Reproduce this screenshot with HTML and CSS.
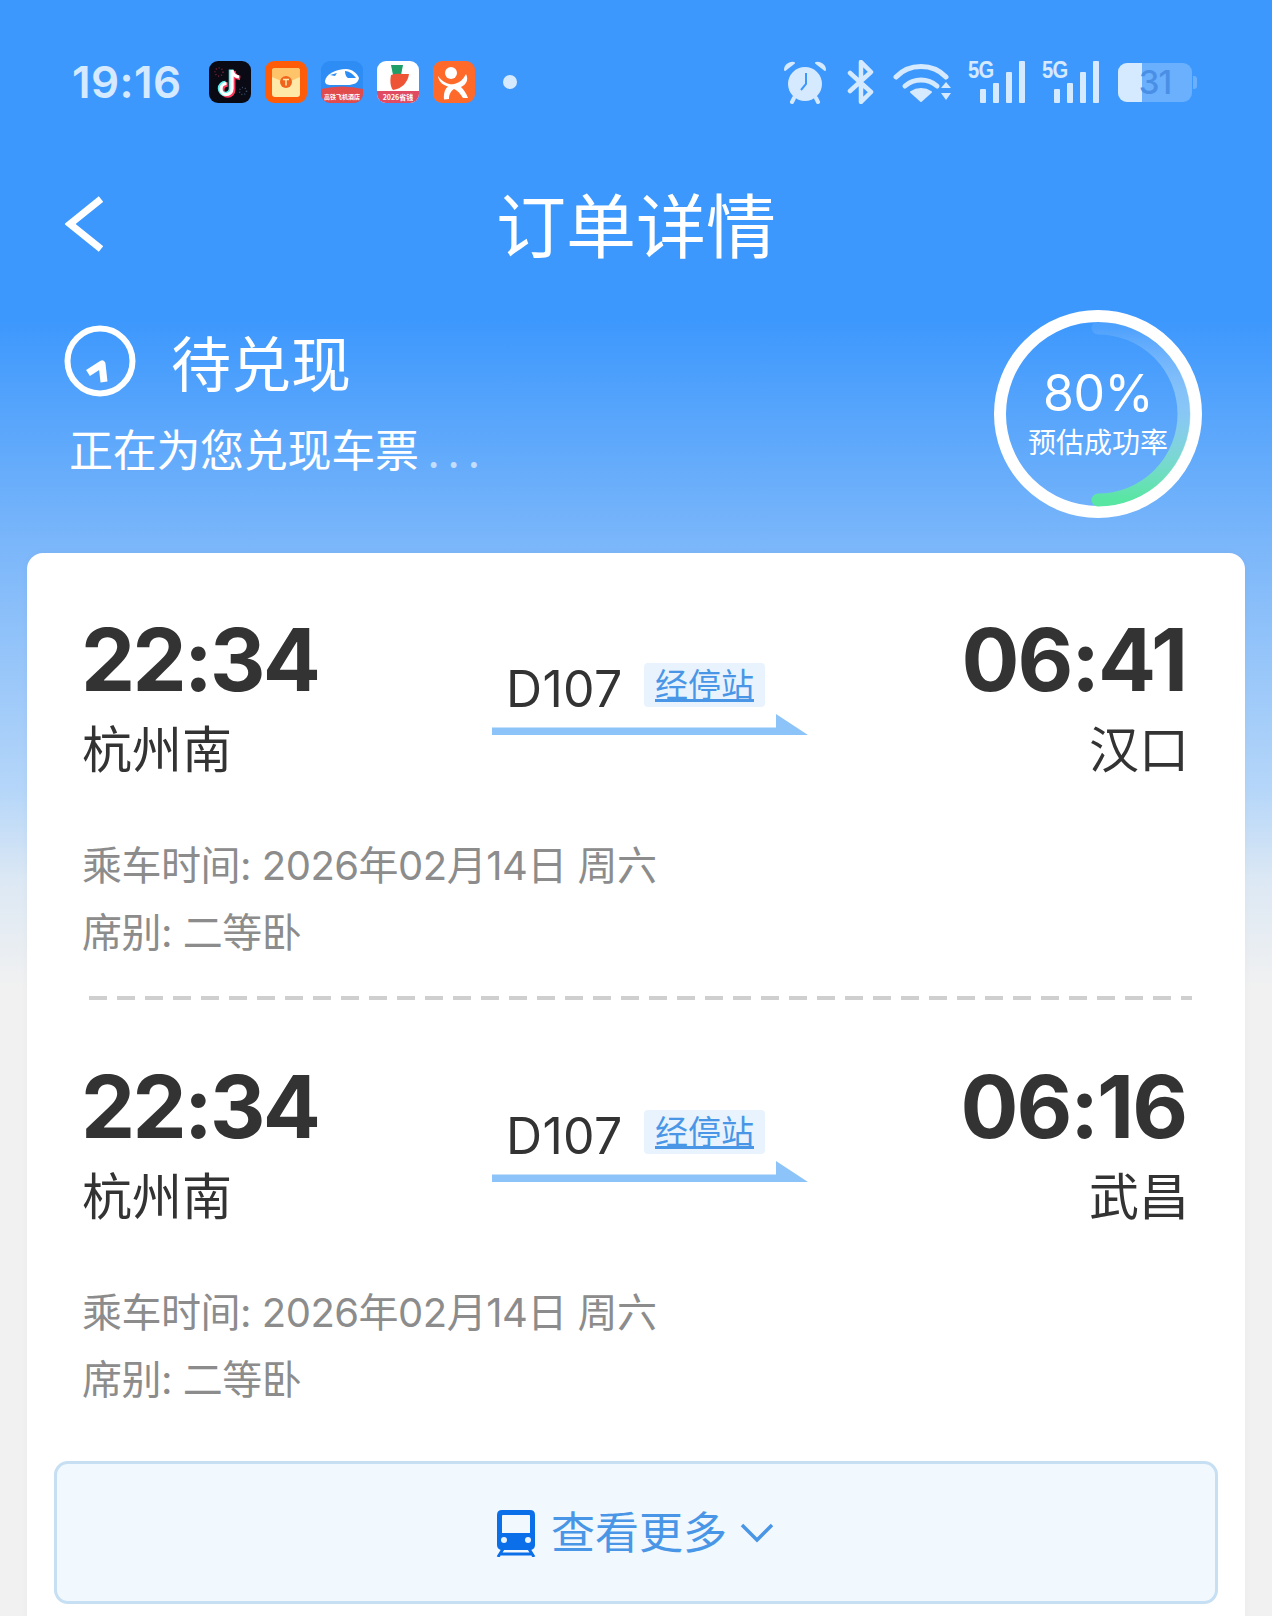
FILE: index.html
```html
<!DOCTYPE html>
<html lang="zh-CN">
<head>
<meta charset="utf-8">
<title>订单详情</title>
<link rel="stylesheet" href="styles.css">
</head>
<body>
<div class="page">
  <div class="status">
    <span class="clock">19:16</span>
    <div class="apps">
      <svg class="app" viewBox="0 0 42 42"><rect width="42" height="42" rx="9" fill="#0a0a14"/><circle cx="10" cy="11" r="4" fill="none" stroke="#7a2038" stroke-width="1.5" stroke-dasharray="1 2"/><circle cx="34" cy="30" r="3.5" fill="none" stroke="#38506a" stroke-width="1.5" stroke-dasharray="1 2"/><path d="M23 9v19a5.5 5.5 0 1 1-5.5-5.5" fill="none" stroke="#ff3a5c" stroke-width="4.5" transform="translate(1.2 1)"/><path d="M23 9c.5 4 3 6.500 7 7" fill="none" stroke="#ff3a5c" stroke-width="4.500" transform="translate(1.2 1)"/><path d="M23 9v19a5.500 5.500 0 1 1-5.500-5.500" fill="none" stroke="#5ff0ea" stroke-width="4.500" transform="translate(-1 -.5)"/><path d="M23 9v19a5.500 5.500 0 1 1-5.500-5.500M23 9c.5 4 3 6.500 7 7" fill="none" stroke="#fff" stroke-width="3.200"/></svg>
      <svg class="app" viewBox="0 0 42 42"><rect width="42" height="42" rx="9" fill="#ff5c0a"/><rect x="7" y="7" width="28" height="29" rx="3" fill="#ffe9a8"/><path d="M7 10q0-3 3-3h22q3 0 3 3v6l-14 6-14-6z" fill="#ffc46a"/><circle cx="21" cy="21" r="6" fill="#f0641e"/><path d="M18 18.500h6M21 18.500v6" stroke="#ffe9a8" stroke-width="1.500"/></svg>
      <svg class="app" viewBox="0 0 42 42"><defs><clipPath id="rc"><rect width="42" height="42" rx="9"/></clipPath></defs><g clip-path="url(#rc)"><rect width="42" height="42" fill="#2e8cf5"/><path d="M4 20c1-7 11-12 21-12 6 0 11 4 13 9-1 5-5 7-12 7H10c-4 0-6-1-6-4z" fill="#fff"/><path d="M24 10c4 0 8 3 11 7h-8c-2-1-3-4-3-7zM9 14l7-2-2 3zM8 20h18" fill="#2e8cf5"/><path d="M0 28q21-5 42 0v14H0z" fill="#e14b4b"/><text x="21" y="38" class="tiny tiny-s">高铁飞机酒店</text></g></svg>
      <svg class="app" viewBox="0 0 42 42"><defs><clipPath id="rd"><rect width="42" height="42" rx="9"/></clipPath></defs><g clip-path="url(#rd)"><rect width="42" height="42" fill="#fff"/><path d="M14 4h12l-2 10h-8z" fill="#1f9e68"/><path d="M14 14c5-2 11-1 18-1-1 8-7 15-16 16-3-4-3-10-2-15z" fill="#ee5537"/><rect y="30" width="42" height="12" fill="#e04a62"/><text x="21" y="39" class="tiny">2026省钱</text></g></svg>
      <svg class="app" viewBox="0 0 42 42"><rect width="42" height="42" rx="9" fill="#ff6a2a"/><circle cx="18" cy="12" r="6" fill="#fff"/><path d="M5 15c5 7 12 9 16 8 5-1 9-4 12-10 3 6 0 11-5 13 3 3 5 6 7 11h-5c-3-5-6-8-9-9-3 2-5 5-5 10l-5 .5c-.5-6 1-11 4-13-4-1-9-4-10-10z" fill="#fff"/></svg>
      <span class="dot"></span>
    </div>
    <div class="sys">
      <svg class="s-alarm" viewBox="0 0 44 44"><circle cx="22" cy="24" r="17" fill="#d5e9ff"/><path d="M23 13v11l-5 6" fill="none" stroke="#3d98fd" stroke-width="2"/><path d="M2 10c0-5 5-8 9-7zM42 10c0-5-5-8-9-7z" fill="#d5e9ff" stroke="#d5e9ff" stroke-width="2" stroke-linejoin="round"/><path d="M11 38l-2 4M33 38l2 4" stroke="#d5e9ff" stroke-width="4" stroke-linecap="round"/></svg>
      <svg class="s-bt" viewBox="0 0 28 44"><path d="M3 13l21 19-10 10V2l10 10L3 31" fill="none" stroke="#d5e9ff" stroke-width="4.500" stroke-linejoin="round" stroke-linecap="round"/></svg>
      <svg class="s-wifi" viewBox="0 0 58 44"><g fill="none" stroke="#d5e9ff" stroke-width="5" stroke-linecap="round"><path d="M3 17C16 3 40 3 53 17"/><path d="M12 26c9-8 23-8 32 0"/></g><path d="M18 32c6-4 14-4 20 0l-10 9z" fill="#d5e9ff" stroke="#d5e9ff" stroke-linejoin="round" stroke-width="2"/><path d="M48 28h10l-5-6zM48 33h10l-5 7z" fill="#d5e9ff"/></svg>
      <div class="sig"><span class="fiveg">5G</span><i class="b1"></i><i class="b2"></i><i class="b3"></i><i class="b4"></i></div>
      <div class="sig"><span class="fiveg">5G</span><i class="b1"></i><i class="b2"></i><i class="b3"></i><i class="b4"></i></div>
      <div class="batt"><span class="fill"></span><span class="num">31</span><span class="cap"></span></div>
    </div>
  </div>

  <div class="nav">
    <svg class="back" viewBox="0 0 38 56"><path d="M36 3L5 28l31 25" fill="none" stroke="#fff" stroke-width="7"/></svg>
    <h1 class="title">订单详情</h1>
  </div>

  <div class="hero">
    <div class="hero-text">
      <div class="state">
        <svg class="clock-ic" viewBox="0 0 72 72"><circle cx="36" cy="36" r="32.500" fill="none" stroke="#fff" stroke-width="6"/><path d="M24 48l14-9 2 18" fill="none" stroke="#fff" stroke-width="7" stroke-linejoin="round"/></svg>
        <span class="state-label">待兑现</span>
      </div>
      <p class="state-sub">正在为您兑现车票<span class="dots"> . . .</span></p>
    </div>
    <div class="ring">
      <svg class="ring-svg" viewBox="0 0 208 208">
        <defs><linearGradient id="arc" x1="0" y1="0" x2="0" y2="1"><stop offset="0" stop-color="#fff" stop-opacity=".08"/><stop offset=".5" stop-color="#a8def0" stop-opacity=".6"/><stop offset="1" stop-color="#58e6a2"/></linearGradient></defs>
        <circle cx="104" cy="104" r="98" fill="none" stroke="#fff" stroke-width="12"/>
        <path d="M104 18a86 86 0 0 1 0 172" fill="none" stroke="url(#arc)" stroke-width="13" stroke-linecap="round"/>
      </svg>
      <span class="pct">80%</span>
      <span class="pct-label">预估成功率</span>
    </div>
  </div>

  <div class="card">
    <section class="leg">
      <div class="route">
        <div class="end">
          <div class="time">22:34</div>
          <div class="station">杭州南</div>
        </div>
        <div class="mid">
          <div class="train-row"><span class="train">D107</span><span class="tag">经停站</span></div>
          <svg class="arrow" viewBox="0 0 316 21"><path d="M0 13.500h284V0l32 21H0z" fill="#8cc4f9"/></svg>
        </div>
        <div class="end right">
          <div class="time">06:41</div>
          <div class="station">汉口</div>
        </div>
      </div>
      <div class="meta">
        <div>乘车时间: 2026年02月14日 周六</div>
        <div>席别: 二等卧</div>
      </div>
    </section>
    <div class="dash"></div>
    <section class="leg">
      <div class="route">
        <div class="end">
          <div class="time">22:34</div>
          <div class="station">杭州南</div>
        </div>
        <div class="mid">
          <div class="train-row"><span class="train">D107</span><span class="tag">经停站</span></div>
          <svg class="arrow" viewBox="0 0 316 21"><path d="M0 13.500h284V0l32 21H0z" fill="#8cc4f9"/></svg>
        </div>
        <div class="end right">
          <div class="time">06:16</div>
          <div class="station">武昌</div>
        </div>
      </div>
      <div class="meta">
        <div>乘车时间: 2026年02月14日 周六</div>
        <div>席别: 二等卧</div>
      </div>
    </section>
    <div class="more">
      <svg class="train-ic" viewBox="0 0 40 48"><path fill-rule="evenodd" d="M6 1h28q5 0 5 5v30q0 4-4 5H5q-4-1-4-5V6q0-5 5-5zm1 5q-1 0-1 1v17h28V7q0-1-1-1z" fill="#0a6fe8"/><circle cx="8" cy="31" r="3" fill="#e9f3fe"/><circle cx="32" cy="31" r="3" fill="#e9f3fe"/><path d="M7 40L2 48M33 40l5 8M5 45h30" stroke="#0a6fe8" stroke-width="3"/></svg>
      <span class="more-label">查看更多</span>
      <svg class="chev" viewBox="0 0 34 22"><path d="M2 3l15 15L32 3" fill="none" stroke="#4a96e6" stroke-width="3.500"/></svg>
    </div>
  </div>
</div>
</body>
</html>
```
FILE: styles.css
```css
* { box-sizing: border-box; }
html, body { margin: 0; padding: 0; }
body { font-family: Inter, "Noto Sans CJK SC", sans-serif; }
.page {
  width: 1272px;
  height: 1616px;
  overflow: hidden;
  background: linear-gradient(180deg, #3d98fd 0, #3d98fd 320px, #7cb7fa 550px, #b5d6f9 790px, #dce8f4 880px, #f1f1f1 990px);
}
.status { height: 164px; display: flex; align-items: center; padding: 0 0 0 72px; color: #d5e9ff; }
.clock { font: 600 44px/1 Inter, sans-serif; width: 137px; letter-spacing: .4px; }
.apps { display: flex; align-items: center; gap: 14px; width: 574px; }
.app { width: 42px; height: 42px; display: block; flex: none; }
.tiny { font: 700 7px "Noto Sans CJK SC", sans-serif; fill: #fff; text-anchor: middle; }
.tiny-s { font-size: 6px; }
.dot { width: 14px; height: 14px; border-radius: 50%; background: #d5e9ff; margin-left: 14px; }
.sys { display: flex; align-items: center; }
.s-alarm { width: 44px; height: 44px; margin-right: 20px; }
.s-bt { width: 28px; height: 44px; margin-right: 18px; }
.s-wifi { width: 58px; height: 44px; margin-right: 17px; }
.sig { position: relative; width: 57px; height: 42px; margin-right: 17px; }
.fiveg { position: absolute; left: 0; top: -2px; font: 700 23px/1 "Liberation Sans", sans-serif; letter-spacing: -1px; transform: scaleX(.88); transform-origin: left; }
.sig i { position: absolute; bottom: 0; width: 6px; background: #d5e9ff; border-radius: 1px; }
.b1 { left: 12px; height: 14px; }
.b2 { left: 25px; height: 20px; }
.b3 { left: 38px; height: 31px; }
.b4 { left: 51px; height: 42px; }
.batt { position: relative; width: 74px; height: 39px; margin-left: 2px; background: rgba(213,233,255,.3); border-radius: 9px; display: flex; align-items: center; justify-content: center; }
.fill { position: absolute; left: 0; top: 0; bottom: 0; width: 24px; background: #d5e9ff; border-radius: 9px 0 0 9px; }
.num { position: relative; font: 500 33px/1 Inter, sans-serif; color: #4a8fe6; letter-spacing: -1px; }
.cap { position: absolute; right: -5px; top: 13px; width: 4px; height: 13px; background: rgba(213,233,255,.3); border-radius: 0 3px 3px 0; }

.nav { position: relative; height: 124px; display: flex; align-items: center; justify-content: center; }
.back { position: absolute; left: 65px; top: 32px; width: 38px; height: 56px; }
.title { margin: 0 0 6px; font: 400 70px/1 "Noto Sans CJK SC", sans-serif; color: #fff; }

.hero { display: flex; justify-content: space-between; height: 265px; padding: 0 70px 0 64px; }
.state { display: flex; align-items: center; height: 78px; margin-top: 34px; }
.clock-ic { width: 72px; height: 72px; margin-right: 35px; }
.state-label { font: 400 60px/1 "Noto Sans CJK SC", sans-serif; color: #fff; }
.state-sub { margin: 26px 0 0 5px; font: 400 44px/1 "Noto Sans CJK SC", sans-serif; color: #fff; letter-spacing: -.3px; }
.dots { color: #c2defc; letter-spacing: -1px; }
.ring { position: relative; width: 208px; height: 208px; margin-top: 22px; display: flex; flex-direction: column; align-items: center; padding-top: 58px; color: #fff; }
.ring-svg { position: absolute; inset: 0; width: 208px; height: 208px; }
.pct { font: 400 50px/1 Inter, sans-serif; letter-spacing: -.5px; }
.pct-label { font: 400 28px/1 "Noto Sans CJK SC", sans-serif; margin-top: 9px; }

.card { margin: 0 27px; background: #fff; border-radius: 16px 16px 0 0; padding-top: 62px; height: 1100px; box-shadow: 0 0 8px rgba(0,0,0,.03); }
.leg { padding: 0 56px 0 55px; }
.route { display: grid; grid-template-columns: 410px 316px 1fr; }
.time { font: 700 86px/90px Inter, sans-serif; color: #333; letter-spacing: -2.7px; margin-left: -1px; }
.right .time { letter-spacing: -2px; margin-right: 3px; }
.station { font: 400 50px/82px "Noto Sans CJK SC", sans-serif; color: #333; }
.right { text-align: right; }
.mid { padding-top: 48px; }
.train-row { display: flex; align-items: center; height: 44px; margin-bottom: 7px; padding-left: 14px; }
.train { position: relative; top: 4px; font: 400 50px/1 Inter, sans-serif; color: #333; width: 138px; letter-spacing: .3px; }
.tag { width: 121px; height: 44px; background: #e8f3fe; border-radius: 4px; font: 400 33px/40px "Noto Sans CJK SC", sans-serif; color: #4a96e6; text-align: center; text-decoration: underline; }
.arrow { display: block; width: 316px; height: 21px; }
.meta { margin-top: 45px; font: 400 40px/67px Inter, "Noto Sans CJK SC", sans-serif; color: #8c8c8c; letter-spacing: -.5px; }
.dash { height: 4px; margin: 30px 53px 62px 62px; background: repeating-linear-gradient(90deg, #cfcfcf 0 18px, transparent 18px 28px); }
.more { margin: 48px 27px 0; height: 143px; border: 3px solid #c6dff3; border-radius: 14px; background: #f1f8fe; display: flex; align-items: center; justify-content: center; }
.train-ic { width: 40px; height: 48px; margin-right: 15px; }
.more-label { font: 400 44px/1 "Noto Sans CJK SC", sans-serif; color: #4a96e6; margin-top: -5px; }
.chev { width: 34px; height: 22px; margin-left: 13px; margin-right: 2px; }
```
